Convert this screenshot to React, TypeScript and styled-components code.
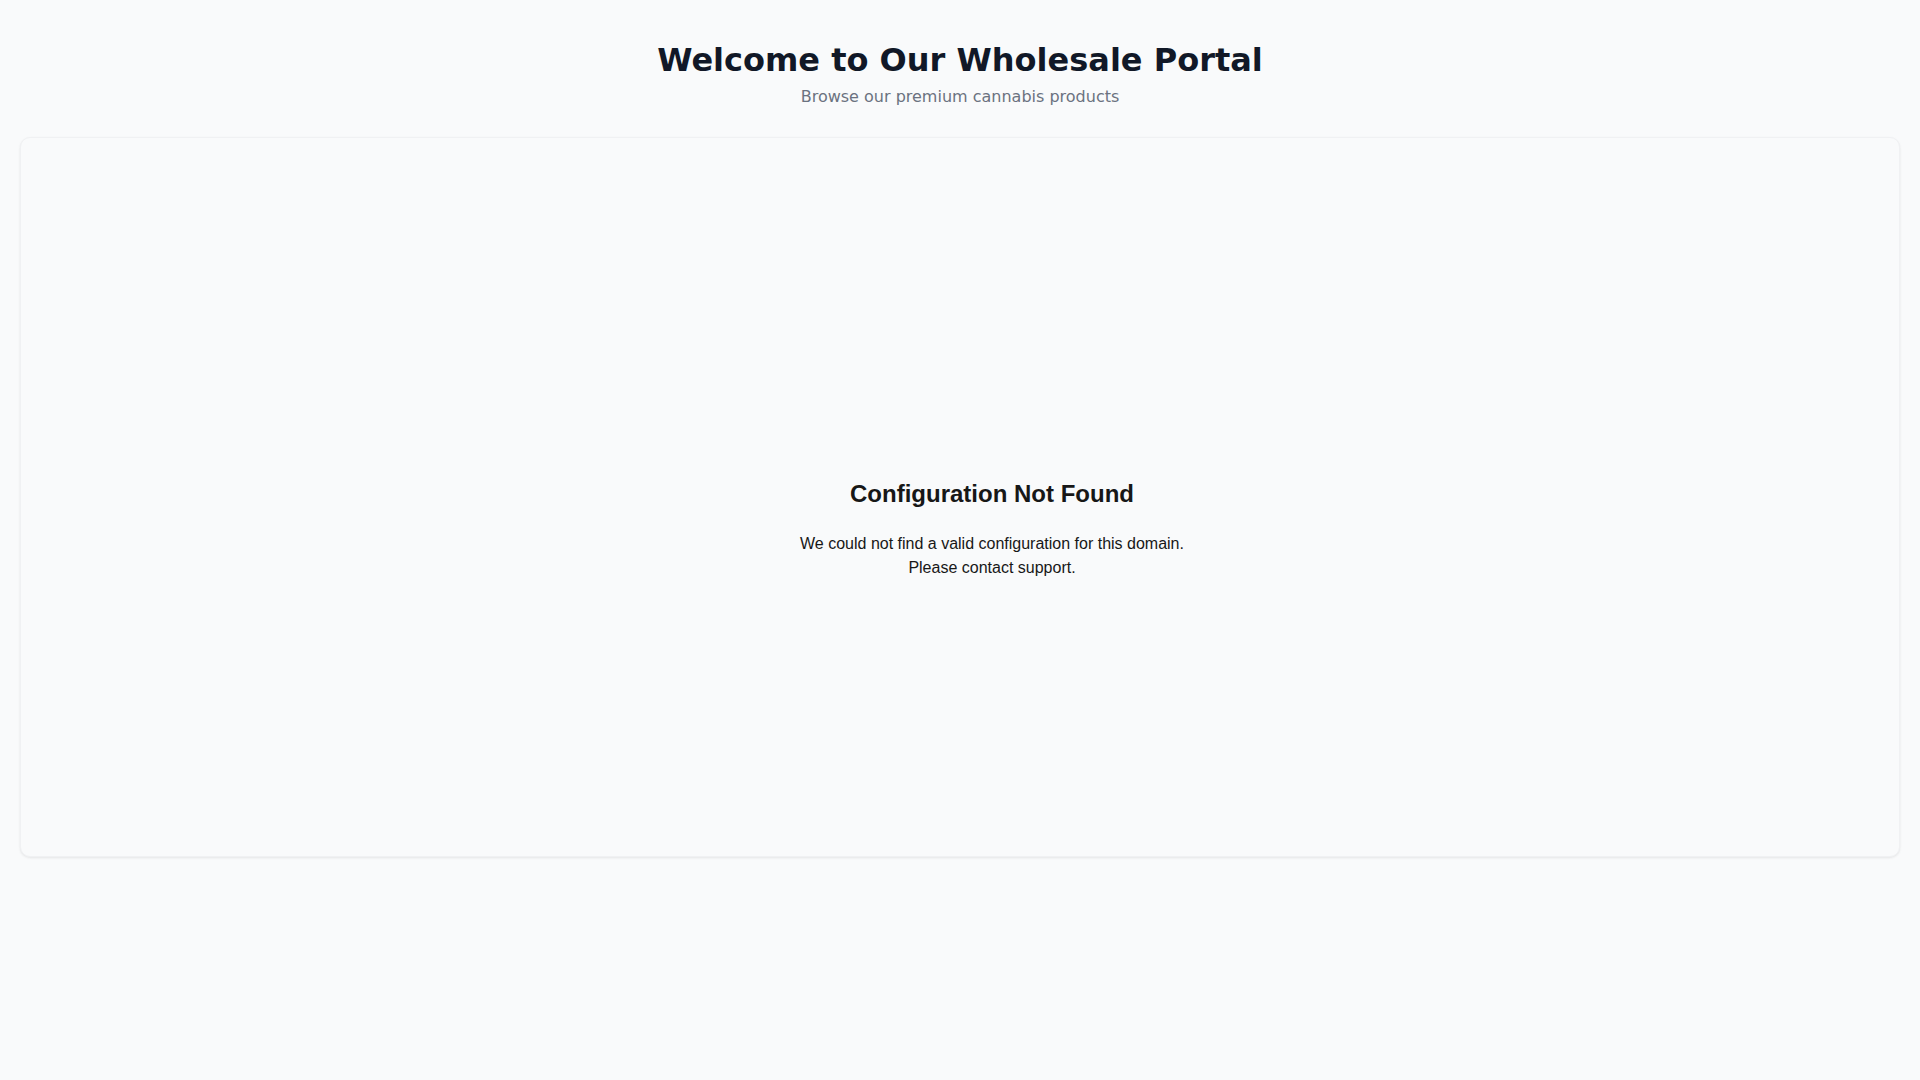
import React from "react";
import styled, { createGlobalStyle } from "styled-components";

const GlobalStyle = createGlobalStyle`
  html, body {
    margin: 0;
    padding: 0;
    background: #f9fafb;
  }
  body {
    font-family: "DejaVu Sans", sans-serif;
  }
  * { box-sizing: border-box; }
`;

const Page = styled.div`
  min-height: 100vh;
  background: #f9fafb;
  padding: 40px 20px;
  display: flex;
  flex-direction: column;
`;

const Header = styled.header`
  display: flex;
  flex-direction: column;
  align-items: center;
  text-align: center;
`;

const Title = styled.h1`
  margin: 0;
  font-family: "DejaVu Sans", sans-serif;
  font-weight: 700;
  font-size: 32px;
  line-height: 40px;
  color: #111827;
`;

const Subtitle = styled.p`
  margin: 5px 0 0;
  font-family: "DejaVu Sans", sans-serif;
  font-size: 16px;
  line-height: 24px;
  color: #6b7280;
`;

const Card = styled.main`
  margin-top: 28px;
  background: #f9fafb;
  border: 1px solid #f0f1f3;
  border-radius: 10px;
  box-shadow: 0 1px 3px rgba(0, 0, 0, 0.06), 0 1px 2px rgba(0, 0, 0, 0.03);
  padding: 340px 0 276px 64px;
  display: flex;
  flex-direction: column;
  align-items: center;
  text-align: center;
  font-family: "Liberation Sans", Arial, sans-serif;
`;

const ErrorTitle = styled.h2`
  margin: 0 0 22px;
  font-size: 24px;
  line-height: 32px;
  font-weight: 700;
  color: #171717;
`;

const ErrorText = styled.p`
  margin: 0;
  max-width: 400px;
  font-size: 16px;
  line-height: 24px;
  color: #171717;
`;

export default function App() {
  return (
    <>
      <GlobalStyle />
      <Page>
        <Header>
          <Title>Welcome to Our Wholesale Portal</Title>
          <Subtitle>Browse our premium cannabis products</Subtitle>
        </Header>
        <Card>
          <ErrorTitle>Configuration Not Found</ErrorTitle>
          <ErrorText>
            We could not find a valid configuration for this domain. Please contact support.
          </ErrorText>
        </Card>
      </Page>
    </>
  );
}
